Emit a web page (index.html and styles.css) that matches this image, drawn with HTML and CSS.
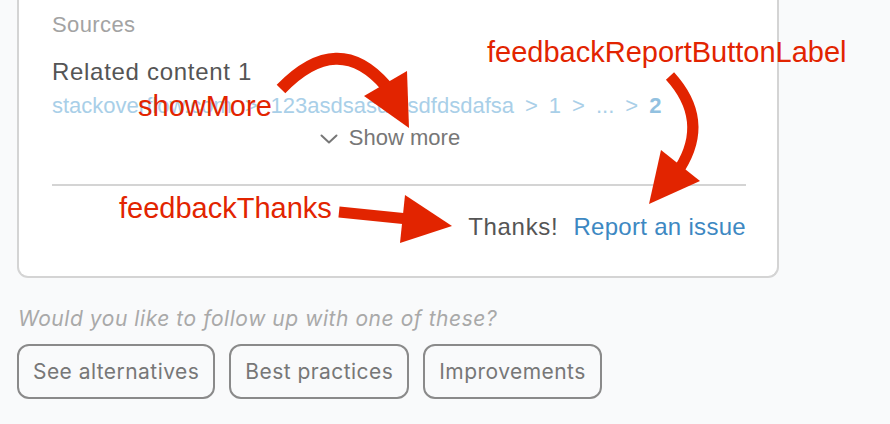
FILE: index.html
```html
<!DOCTYPE html>
<html lang="en">
<head>
<meta charset="utf-8">
<title>Feedback</title>
<link rel="stylesheet" href="styles.css">
</head>
<body>
<div class="page">
  <section class="card">
    <div class="sources-label">Sources</div>
    <div class="related-title">Related content 1</div>
    <div class="crumbs">
      <span>stackoverflow.com</span><span class="sep sep-wide">&gt;</span><span>123asdsasdfasdfdsdafsa</span><span class="sep">&gt;</span><span>1</span><span class="sep">&gt;</span><span>...</span><span class="sep">&gt;</span><span class="crumb-current">2</span>
    </div>
    <div class="show-more-row">
      <button class="show-more">
        <svg class="chev" width="18" height="10" viewBox="0 0 18 10"><path d="M1.5 1.5 L9 8.5 L16.5 1.5" fill="none" stroke="#777" stroke-width="2" stroke-linecap="round" stroke-linejoin="round"/></svg>
        <span>Show more</span>
      </button>
    </div>
    <hr class="divider">
    <div class="feedback-row">
      <span class="thanks">Thanks!</span>
      <a class="report" href="#">Report an issue</a>
    </div>
  </section>

  <p class="followup">Would you like to follow up with one of these?</p>
  <div class="chips">
    <button class="chip">See alternatives</button>
    <button class="chip">Best practices</button>
    <button class="chip">Improvements</button>
  </div>
</div>

<div class="annot annot-showmore">showMore</div>
<div class="annot annot-report">feedbackReportButtonLabel</div>
<div class="annot annot-thanks">feedbackThanks</div>

<svg class="arrows" width="890" height="424" viewBox="0 0 890 424">
  <path d="M281 89 Q338 30 386 86" fill="none" stroke="#e22400" stroke-width="12"/>
  <polygon points="364,96 407,71 409,128" fill="#e22400"/>
  <path d="M670 76 Q710 120 680 168" fill="none" stroke="#e22400" stroke-width="11"/>
  <polygon points="661,150 700,181 649,204" fill="#e22400"/>
  <path d="M339 212 L408 219" fill="none" stroke="#e22400" stroke-width="11"/>
  <polygon points="405,195 400,243 452,226" fill="#e22400"/>
</svg>
</body>
</html>
```

FILE: styles.css
```css
html, body {
  margin: 0;
  padding: 0;
  background: #f9fafb;
}

body {
  width: 890px;
  height: 424px;
  overflow: hidden;
  position: relative;
  font-family: "Liberation Sans", Arial, sans-serif;
}

.page {
  padding-left: 17px;
}

.card {
  width: 762px;
  box-sizing: border-box;
  background: #ffffff;
  border: 2px solid #d4d4d4;
  border-top: none;
  border-radius: 0 0 11px 11px;
  padding: 12px 31px 34px 33px;
}

.sources-label {
  font-size: 22px;
  line-height: 26px;
  color: #a3a3a3;
  letter-spacing: 0.4px;
}

.related-title {
  margin-top: 19px;
  font-size: 24px;
  line-height: 30px;
  color: #555555;
  letter-spacing: 0.7px;
}

.crumbs {
  margin-top: 7px;
  font-size: 22px;
  line-height: 24px;
  color: #a9cfe8;
  white-space: nowrap;
}

.sep {
  margin: 0 11px;
}

.sep-wide {
  margin: 0 13px;
}

.crumb-current {
  font-weight: bold;
  color: #92c1e0;
}

.show-more-row {
  margin-top: 7px;
  display: flex;
  justify-content: center;
  padding-right: 18px;
}

.show-more {
  display: flex;
  align-items: center;
  gap: 11px;
  border: none;
  background: none;
  padding: 0;
  font-family: "Liberation Sans", Arial, sans-serif;
  font-size: 22px;
  line-height: 26px;
  color: #777777;
}

.chev {
  display: block;
  margin-top: 1px;
}

.divider {
  margin: 33px 0 0 0;
  border: none;
  height: 2px;
  background: #d4d4d4;
}

.feedback-row {
  margin-top: 26px;
  display: flex;
  justify-content: flex-end;
  gap: 15px;
  font-size: 24px;
  line-height: 30px;
}

.thanks {
  color: #555555;
  letter-spacing: 0.7px;
}

.report {
  color: #3d88c2;
  text-decoration: none;
  letter-spacing: 0.3px;
}

.followup {
  margin: 29px 0 0 1px;
  font-family: Inter, "Noto Sans", sans-serif;
  font-style: italic;
  font-size: 21px;
  line-height: 24px;
  letter-spacing: 0.55px;
  color: #a9a9a9;
}

.chips {
  margin-top: 13px;
  display: flex;
  gap: 14px;
}

.chip {
  height: 55px;
  box-sizing: border-box;
  padding: 0 14px;
  border: 2px solid #8a8a8a;
  border-radius: 12px;
  background: transparent;
  font-family: Inter, "Noto Sans", sans-serif;
  font-size: 21px;
  letter-spacing: 0.45px;
  color: #777777;
}

.annot {
  position: absolute;
  font-family: "Liberation Sans", Arial, sans-serif;
  font-size: 29px;
  line-height: 29px;
  color: #e22400;
  white-space: nowrap;
}

.annot-showmore {
  left: 138px;
  top: 92px;
}

.annot-report {
  left: 487px;
  top: 38px;
}

.annot-thanks {
  left: 119px;
  top: 194px;
}

.arrows {
  position: absolute;
  left: 0;
  top: 0;
  pointer-events: none;
}
```
